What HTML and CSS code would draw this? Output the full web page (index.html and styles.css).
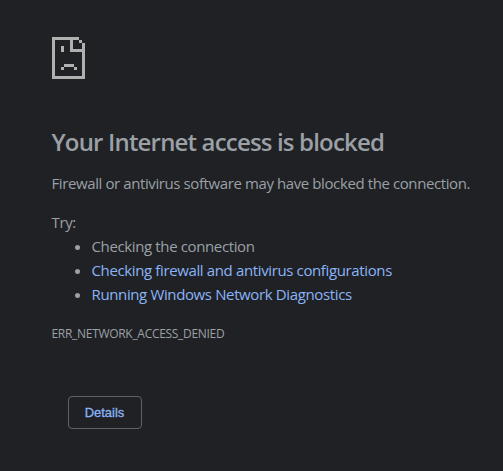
FILE: index.html
```html
<!DOCTYPE html>
<html lang="en">
<head>
  <meta charset="UTF-8">
  <meta name="viewport" content="width=device-width, initial-scale=1.0">
  <title>Your Internet access is blocked</title>
  <link rel="stylesheet" href="styles.css">
</head>
<body>

  <div class="interstitial">
    <svg class="icon" width="33" height="42" viewBox="0 0 33 42" shape-rendering="crispEdges" aria-hidden="true">
      <!-- page outline with folded corner -->
      <path d="M0 0H27V3H30V6H33V42H0ZM3 3V39H30V15H18V3ZM21 3V12H30V6H27V3Z" fill-rule="evenodd"/>
      <!-- face -->
      <path d="M9 9H12V15H9ZM12 27H22V30H12ZM9 30H12V33H9ZM22 30H25V33H22Z"/>
    </svg>

    <h1>Your Internet access is blocked</h1>
    <p class="summary">Firewall or antivirus software may have blocked the connection.</p>

    <div class="suggestions">
      <p>Try:</p>
      <ul>
        <li><span class="check">Checking the connection</span></li>
        <li><a class="firewall" href="#">Checking firewall and antivirus configurations</a></li>
        <li><a class="diagnose" href="#">Running Windows Network Diagnostics</a></li>
      </ul>
    </div>

    <div class="errorCode">ERR_NETWORK_ACCESS_DENIED</div>

    <button class="detailsBtn">Details</button>
  </div>

</body>
</html>
```

FILE: styles.css
```css
body {
  margin: 0;
  background-color: #202124;
  color: #9aa0a6;
  font-family: "Segoe UI", "Open Sans", sans-serif;
  font-size: 15px;
  line-height: 24px;
}

.interstitial {
  padding: 37px 0 0 51.5px;
  white-space: nowrap;
}

.icon {
  display: block;
  margin-left: 0.5px;
  fill: #b0b0b0;
}

h1 {
  margin: 48px 0 14px;
  font-size: 24px;
  font-weight: 600;
  line-height: 30px;
  letter-spacing: -0.83px;
}

p {
  margin: 0;
}

.summary {
  margin-bottom: 15px;
  letter-spacing: -0.4px;
}

.suggestions {
  letter-spacing: -0.37px;
}

ul {
  margin: 0;
  padding-left: 40px;
}

a {
  color: #8ab4f8;
  text-decoration: none;
}

.errorCode {
  margin-top: 16px;
  font-size: 12px;
  letter-spacing: -0.3px;
}

.detailsBtn {
  display: block;
  box-sizing: border-box;
  width: 74px;
  height: 33px;
  margin: 50px 0 0 16.5px;
  padding: 0 1px 0 0;
  border: 1px solid #5f6368;
  border-radius: 4px;
  background-color: transparent;
  color: #8ab4f8;
  font-family: "Liberation Sans", Arial, sans-serif;
  font-size: 13px;
  font-weight: 500;
  -webkit-text-stroke: 0.3px #8ab4f8;
  cursor: pointer;
}

.detailsBtn:hover {
  border-color: #8ab4f8;
}
```
